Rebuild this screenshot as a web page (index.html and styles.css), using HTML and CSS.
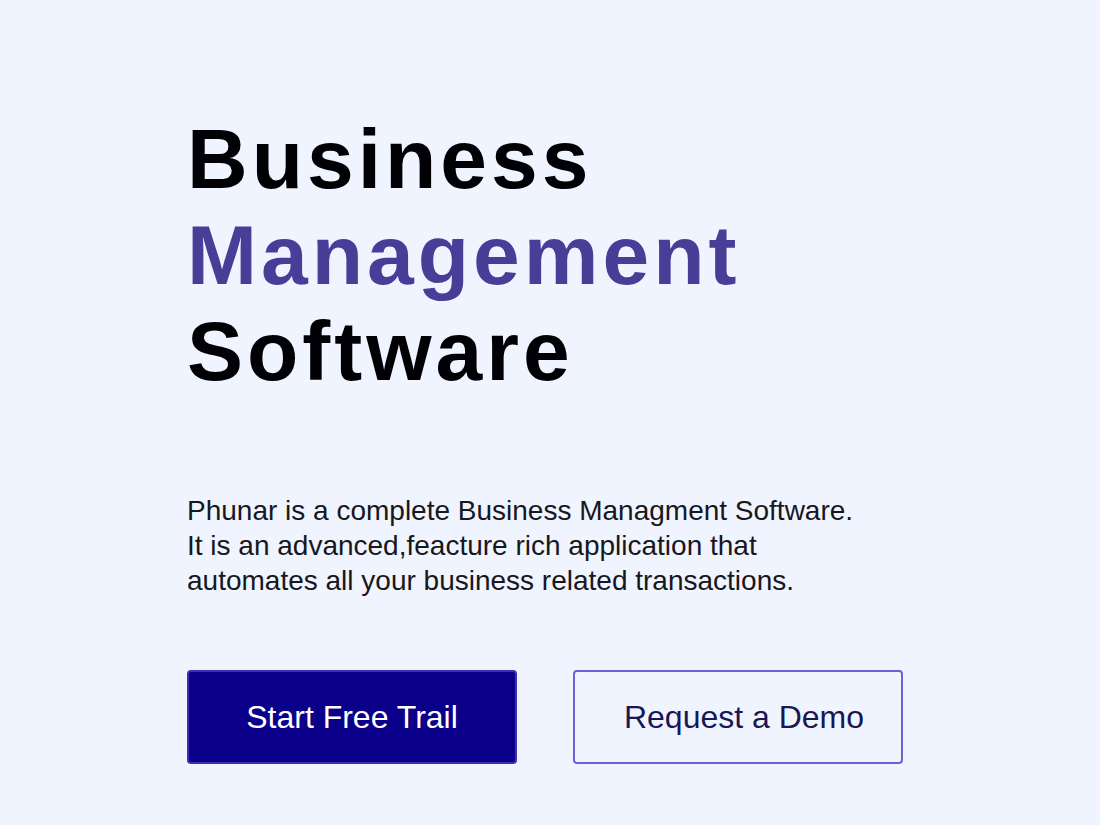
FILE: index.html
```html
<!DOCTYPE html>
<html lang="en">
<head>
    <meta charset="UTF-8">
    <meta name="viewport" content="width=device-width, initial-scale=1.0">
    <title>Phunar</title>
    <link rel="stylesheet" href="styles.css">
</head>
<body>
    <main class="hero">
        <h1>Business<br><span>Management</span><br>Software</h1>
        <p>Phunar is a complete Business Managment Software.<br>
        It is an advanced,feacture rich application that<br>
        automates all your business related transactions.</p>
        <div class="buttons">
            <button type="button" class="btn btn-trial">Start Free Trail</button>
            <button type="button" class="btn btn-demo">Request a Demo</button>
        </div>
    </main>
</body>
</html>
```
FILE: styles.css
```css
* {
    box-sizing: border-box;
}
body {
    margin: 0;
    min-height: 100vh;
    background-color: #f0f4ff;
    font-family: "Liberation Sans", Arial, sans-serif;
    color: #17171c;
}
.hero {
    padding: 111px 17% 60px;
}
h1 {
    margin: 0;
    font-size: 84px;
    line-height: 96px;
    letter-spacing: 4px;
    color: #000005;
}
h1 span {
    color: #483d97;
}
p {
    margin: 94px 0 0;
    font-size: 28px;
    line-height: 35px;
}
.buttons {
    display: flex;
    flex-wrap: wrap;
    gap: 56px;
    margin-top: 72px;
}
.btn {
    width: 330px;
    height: 94px;
    border: 2px solid #7060d8;
    border-radius: 4px;
    font-family: inherit;
    font-size: 32px;
    cursor: pointer;
}
.btn-trial {
    background-color: #0a008a;
    border-color: #3c2fb4;
    color: #fff;
}
.btn-demo {
    background-color: transparent;
    color: #191654;
    padding-left: 18px;
}
```
